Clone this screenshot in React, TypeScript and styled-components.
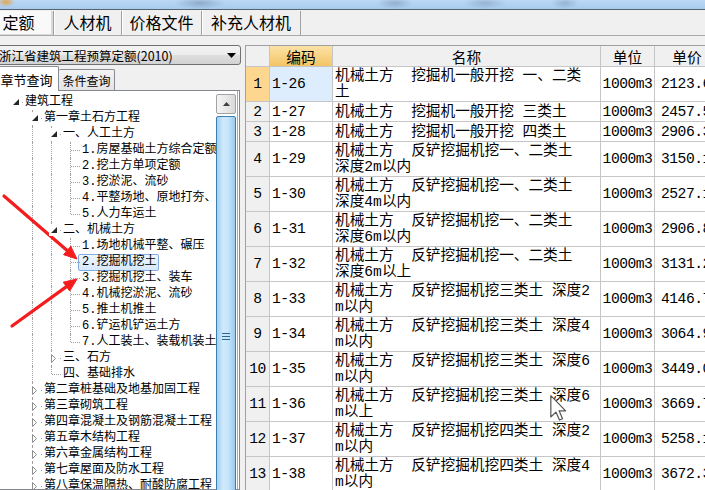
import React from 'react';
import styled, { createGlobalStyle, css } from 'styled-components';

const UI_FONT = `"Noto Sans CJK SC", "Noto Sans", sans-serif`;
const GRID_FONT = `"Liberation Mono", "Noto Sans CJK SC", monospace`;

const GlobalStyle = createGlobalStyle`
  * { box-sizing: border-box; }
  html, body {
    margin: 0;
    padding: 0;
    width: 705px;
    height: 490px;
    overflow: hidden;
    background: #f0f0f0;
  }
  #root { width: 705px; height: 490px; overflow: hidden; }
`;

const Window = styled.div`
  position: relative;
  width: 705px;
  height: 490px;
  overflow: hidden;
  display: flex;
  flex-direction: column;
  font-family: ${UI_FONT};
  color: #000;
  background: #f0f0f0;
`;

const TitleStrip = styled.div`
  flex: none;
  height: 10px;
  border-bottom: 1px solid #56626e;
  background:
    radial-gradient(ellipse 9px 5px at 6px 2px, rgba(230, 160, 60, 0.9), transparent),
    radial-gradient(ellipse 26px 6px at 200px 3px, rgba(95, 120, 150, 0.45), transparent),
    radial-gradient(ellipse 18px 6px at 395px 3px, rgba(95, 120, 150, 0.4), transparent),
    radial-gradient(ellipse 22px 6px at 485px 3px, rgba(95, 120, 150, 0.35), transparent),
    radial-gradient(ellipse 14px 6px at 565px 3px, rgba(95, 120, 150, 0.35), transparent),
    linear-gradient(#bcd9f5, #a7cbee);
`;

const TabBar = styled.div`
  flex: none;
  height: 26px;
  display: flex;
  padding-top: 1px;
  border-bottom: 1px solid #a9a9a9;
`;

const Tab = styled.div<{ $width: number; $active?: boolean }>`
  flex: none;
  width: ${(p) => p.$width}px;
  display: flex;
  align-items: center;
  justify-content: center;
  padding-bottom: 3px;
  font-size: 16px;
  border-right: 1px solid #a0a0a0;
  box-shadow: inset 1px 0 0 #ffffff;
  ${(p) =>
    p.$active &&
    css`
      background: #f9f9f9;
      box-shadow: inset -2px -1px 0 #dadada;
    `}
  &:first-child { margin-left: -16px; }
`;

const Main = styled.div`
  flex: 1;
  min-height: 0;
  display: flex;
`;

const LeftPanel = styled.div`
  flex: none;
  width: 247px;
  margin-left: -6px;
  padding-top: 9px;
  display: flex;
  flex-direction: column;
`;

const Dropdown = styled.div`
  flex: none;
  height: 20px;
  display: flex;
  align-items: center;
  justify-content: space-between;
  padding: 0 4px 0 4px;
  border: 1px solid #707070;
  border-radius: 3px;
  background: linear-gradient(#f4f4f4, #ececec 48%, #dedede 52%, #d2d2d2);
  font-size: 12.5px;
  white-space: nowrap;
`;

const SubTabs = styled.div`
  flex: none;
  height: 24px;
  margin-top: 1px;
  display: flex;
  align-items: flex-start;
`;

const SubTab = styled.div<{ $width: number; $active?: boolean }>`
  position: relative;
  z-index: 1;
  flex: none;
  width: ${(p) => p.$width}px;
  display: flex;
  align-items: center;
  justify-content: center;
  border: 1px solid #898c95;
  border-bottom: none;
  border-radius: 2px 2px 0 0;
  white-space: nowrap;
  ${(p) =>
    p.$active
      ? css`
          height: 25px;
          font-size: 13px;
          background: #ffffff;
        `
      : css`
          height: 21px;
          margin-top: 3px;
          font-size: 12px;
          border-left: none;
          background: linear-gradient(#f3f3f3, #e4e4e4);
        `}
`;

const TreeBox = styled.div`
  flex: 1;
  min-height: 0;
  margin-right: 1px;
  display: flex;
  padding-right: 3px;
  border: 1px solid #828790;
  background: #ffffff;
  box-shadow: inset -1px 0 0 #ffffff, inset -2px 0 0 #a9a9a9;
`;

const TreeList = styled.div`
  flex: 1;
  min-width: 0;
  overflow: hidden;
  padding: 3px 0 0 9px;
  font-family: ${GRID_FONT};
  font-size: 12px;
`;

const TreeRow = styled.div`
  height: 16px;
  display: flex;
  align-items: center;
  white-space: nowrap;
`;

type VLine = 'none' | 'full' | 'upper' | 'lower';

const vRange: Record<VLine, string> = {
  none: 'display: none;',
  full: 'top: 0; bottom: 0;',
  upper: 'top: 0; height: 8px;',
  lower: 'top: 8px; bottom: 0;',
};

const Guide = styled.span<{ $v: VLine; $h?: boolean }>`
  position: relative;
  flex: none;
  width: 19px;
  height: 16px;
  &::before {
    content: '';
    position: absolute;
    left: 9px;
    border-left: 1px dotted #a0a0a0;
    ${(p) => vRange[p.$v]}
  }
  ${(p) =>
    p.$h &&
    css`
      &::after {
        content: '';
        position: absolute;
        left: 10px;
        top: 8px;
        width: 9px;
        border-top: 1px dotted #a0a0a0;
      }
    `}
`;

const Expander = styled.span`
  position: absolute;
  z-index: 1;
  left: 7px;
  top: 2px;
  width: 10px;
  height: 12px;
  display: flex;
  align-items: center;
  padding-left: 2px;
  background: #ffffff;
`;

const TreeLabel = styled.span<{ $selected?: boolean }>`
  height: 16px;
  line-height: 14px;
  padding: 0 2px 0 1px;
  border: 1px solid transparent;
  ${(p) =>
    p.$selected &&
    css`
      height: 17px;
      line-height: 15px;
      margin-left: -2px;
      padding-left: 3px;
      border-color: #84acdd;
      border-radius: 2px;
      background: linear-gradient(#eff6fe, #d6e8fc);
    `}
`;

const ScrollBar = styled.div`
  flex: none;
  width: 20px;
  display: flex;
  flex-direction: column;
  gap: 2px;
  padding-top: 3px;
`;

const ScrollButton = styled.div`
  flex: none;
  height: 20px;
  display: flex;
  align-items: center;
  justify-content: center;
  border: 1px solid #a3a3a3;
  border-radius: 2px;
  background: linear-gradient(to right, #f4f4f4, #e9e9e9 50%, #d9d9d9);
`;

const ScrollThumb = styled.div`
  flex: none;
  height: 440px;
  display: flex;
  align-items: center;
  justify-content: center;
  border: 1px solid #3c7fb1;
  border-radius: 2px;
  background: linear-gradient(to right, #a3d0f0, #cfeafc 35%, #c3e4fa 65%, #98c9ec);
`;

const Splitter = styled.div`
  flex: none;
  width: 4px;
`;

const GridFrame = styled.div`
  flex: none;
  align-self: flex-start;
  width: 480px;
  margin-top: 9px;
  border-top: 1px solid #a0a0a0;
  border-left: 1px solid #a0a0a0;
  background: #ffffff;
  font-family: ${GRID_FONT};
  font-size: 14.67px;
`;

const GridRow = styled.div<{ $height: number }>`
  display: flex;
  height: ${(p) => p.$height}px;
`;

type Align = 'left' | 'center';

const Cell = styled.div<{ $width: number; $align?: Align; $bg?: string; $tight?: boolean; $pad?: number }>`
  flex: none;
  width: ${(p) => p.$width}px;
  display: flex;
  flex-direction: column;
  justify-content: center;
  align-items: ${(p) => (p.$align === 'center' ? 'center' : 'flex-start')};
  padding-left: ${(p) => p.$pad ?? 0}px;
  border-right: 1px solid #c6c6c6;
  border-bottom: 1px solid #c6c6c6;
  background: ${(p) => p.$bg ?? '#ffffff'};
  line-height: 16px;
  white-space: pre;
  overflow: hidden;
  letter-spacing: ${(p) => (p.$tight ? '-0.5px' : '0')};
`;

const HeadCell = styled.div<{ $width: number; $active?: boolean }>`
  flex: none;
  width: ${(p) => p.$width}px;
  display: flex;
  align-items: center;
  justify-content: center;
  font-family: ${UI_FONT};
  font-size: 14.67px;
  border-right: 1px solid #c6c6c6;
  border-bottom: 1px solid #c6c6c6;
  background: ${(p) => (p.$active ? 'linear-gradient(#fbe2a6, #f4c466)' : '#f0f0f0')};
`;

const Overlay = styled.svg`
  position: absolute;
  left: 0;
  top: 0;
  pointer-events: none;
`;

const Cursor = styled.svg`
  position: absolute;
  left: 550px;
  top: 395px;
  pointer-events: none;
`;

type Node = { label: string; open?: boolean; collapsed?: boolean; selected?: boolean; children?: Node[] };

const leaf = (label: string): Node => ({ label });

const tree: Node[] = [
  {
    label: '建筑工程',
    open: true,
    children: [
      {
        label: '第一章土石方工程',
        open: true,
        children: [
          {
            label: '一、人工土方',
            open: true,
            children: ['1.房屋基础土方综合定额', '2.挖土方单项定额', '3.挖淤泥、流砂', '4.平整场地、原地打夯、', '5.人力车运土'].map(leaf),
          },
          {
            label: '二、机械土方',
            open: true,
            children: [
              leaf('1.场地机械平整、碾压'),
              { label: '2.挖掘机挖土', selected: true },
              leaf('3.挖掘机挖土、装车'),
              leaf('4.机械挖淤泥、流砂'),
              leaf('5.推土机推土'),
              leaf('6.铲运机铲运土方'),
              leaf('7.人工装土、装载机装土'),
            ],
          },
          { label: '三、石方', collapsed: true },
          leaf('四、基础排水'),
        ],
      },
      { label: '第二章桩基础及地基加固工程', collapsed: true },
      { label: '第三章砌筑工程', collapsed: true },
      { label: '第四章混凝土及钢筋混凝土工程', collapsed: true },
      { label: '第五章木结构工程', collapsed: true },
      { label: '第六章金属结构工程', collapsed: true },
      { label: '第七章屋面及防水工程', collapsed: true },
      { label: '第八章保温隔热、耐酸防腐工程', collapsed: true },
    ],
  },
];

type FlatRow = { label: string; guides: VLine[]; glyph?: 'open' | 'closed'; selected?: boolean };

const flatten = (nodes: Node[], depth: number, trail: boolean[], out: FlatRow[]) => {
  nodes.forEach((n, i) => {
    const hasNext = i < nodes.length - 1;
    const own: VLine = depth === 0 && i === 0 ? (hasNext ? 'lower' : 'none') : hasNext ? 'full' : 'upper';
    out.push({
      label: n.label,
      guides: [...trail.map((t): VLine => (t ? 'full' : 'none')), own],
      glyph: n.open ? 'open' : n.collapsed ? 'closed' : undefined,
      selected: n.selected,
    });
    if (n.open && n.children) flatten(n.children, depth + 1, [...trail, hasNext], out);
  });
  return out;
};

const treeRows = flatten(tree, 0, [], []);

type Quota = { code: string; name: string[]; price: string };

const quotas: Quota[] = [
  { code: '1-26', name: ['机械土方  挖掘机一般开挖 一、二类', '土'], price: '2123.66' },
  { code: '1-27', name: ['机械土方  挖掘机一般开挖 三类土'], price: '2457.58' },
  { code: '1-28', name: ['机械土方  挖掘机一般开挖 四类土'], price: '2906.35' },
  { code: '1-29', name: ['机械土方  反铲挖掘机挖一、二类土', '深度2m以内'], price: '3150.19' },
  { code: '1-30', name: ['机械土方  反铲挖掘机挖一、二类土', '深度4m以内'], price: '2527.16' },
  { code: '1-31', name: ['机械土方  反铲挖掘机挖一、二类土', '深度6m以内'], price: '2906.87' },
  { code: '1-32', name: ['机械土方  反铲挖掘机挖一、二类土', '深度6m以上'], price: '3131.28' },
  { code: '1-33', name: ['机械土方  反铲挖掘机挖三类土 深度2', 'm以内'], price: '4146.78' },
  { code: '1-34', name: ['机械土方  反铲挖掘机挖三类土 深度4', 'm以内'], price: '3064.92' },
  { code: '1-35', name: ['机械土方  反铲挖掘机挖三类土 深度6', 'm以内'], price: '3449.08' },
  { code: '1-36', name: ['机械土方  反铲挖掘机挖三类土 深度6', 'm以上'], price: '3669.79' },
  { code: '1-37', name: ['机械土方  反铲挖掘机挖四类土 深度2', 'm以内'], price: '5258.17' },
  { code: '1-38', name: ['机械土方  反铲挖掘机挖四类土 深度4', 'm以内'], price: '3672.38' },
];

const COLS = { no: 24, code: 63, name: 268, unit: 54, price: 65 };

const Arrow: React.FC<{ x1: number; y1: number; x2: number; y2: number }> = ({ x1, y1, x2, y2 }) => {
  const len = Math.hypot(x2 - x1, y2 - y1);
  const ux = (x2 - x1) / len;
  const uy = (y2 - y1) / len;
  const bx = x2 - ux * 13;
  const by = y2 - uy * 13;
  const px = -uy * 5.5;
  const py = ux * 5.5;
  return (
    <g fill="#f41c1c" stroke="#f41c1c">
      <line x1={x1} y1={y1} x2={bx} y2={by} strokeWidth={3.2} strokeLinecap="round" />
      <polygon points={`${x2},${y2} ${bx + px},${by + py} ${bx - px},${by - py}`} strokeWidth={1} strokeLinejoin="round" />
    </g>
  );
};

export default function App() {
  return (
    <>
      <GlobalStyle />
      <Window>
        <TitleStrip />
        <TabBar>
          <Tab $width={70} $active>定额</Tab>
          <Tab $width={68}>人材机</Tab>
          <Tab $width={80}>价格文件</Tab>
          <Tab $width={99}>补充人材机</Tab>
        </TabBar>
        <Main>
          <LeftPanel>
            <Dropdown>
              <span>浙江省建筑工程预算定额(2010)</span>
              <svg width="9" height="5" viewBox="0 0 9 5">
                <polygon points="0,0 9,0 4.5,5" fill="#000" />
              </svg>
            </Dropdown>
            <SubTabs>
              <SubTab $width={65} $active>章节查询</SubTab>
              <SubTab $width={56}>条件查询</SubTab>
            </SubTabs>
            <TreeBox>
              <TreeList>
                {treeRows.map((r, i) => (
                  <TreeRow key={i}>
                    {r.guides.map((g, k) => {
                      const own = k === r.guides.length - 1;
                      return (
                        <Guide key={k} $v={g} $h={own}>
                          {own && r.glyph === 'open' && (
                            <Expander>
                              <svg width="6" height="6" viewBox="0 0 6 6">
                                <polygon points="6,0 6,6 0,6" fill="#262626" />
                              </svg>
                            </Expander>
                          )}
                          {own && r.glyph === 'closed' && (
                            <Expander>
                              <svg width="5" height="9" viewBox="0 0 5 9">
                                <polygon points="0.5,0.5 0.5,8.5 4.5,4.5" fill="#fff" stroke="#8c8c8c" />
                              </svg>
                            </Expander>
                          )}
                        </Guide>
                      );
                    })}
                    <TreeLabel $selected={r.selected}>{r.label}</TreeLabel>
                  </TreeRow>
                ))}
              </TreeList>
              <ScrollBar>
                <ScrollButton>
                  <svg width="7" height="4" viewBox="0 0 7 4">
                    <polygon points="0,4 3.5,0 7,4" fill="#404040" />
                  </svg>
                </ScrollButton>
                <ScrollThumb>
                  <svg width="8" height="9" viewBox="0 0 8 9">
                    <g stroke="#2f6690" strokeWidth="1">
                      <line x1="0" y1="1.5" x2="8" y2="1.5" />
                      <line x1="0" y1="4.5" x2="8" y2="4.5" />
                      <line x1="0" y1="7.5" x2="8" y2="7.5" />
                    </g>
                  </svg>
                </ScrollThumb>
              </ScrollBar>
            </TreeBox>
          </LeftPanel>
          <Splitter />
          <GridFrame>
            <GridRow $height={21}>
              <HeadCell $width={COLS.no} />
              <HeadCell $width={COLS.code} $active>编码</HeadCell>
              <HeadCell $width={COLS.name}>名称</HeadCell>
              <HeadCell $width={COLS.unit}>单位</HeadCell>
              <HeadCell $width={COLS.price}>单价</HeadCell>
            </GridRow>
            {quotas.map((q, i) => {
              const first = i === 0;
              return (
                <GridRow key={q.code} $height={q.name.length > 1 ? 35 : 20}>
                  <Cell $width={COLS.no} $align="center" $tight $bg={first ? '#fdd78f' : '#f0f0f0'}>
                    {i + 1}
                  </Cell>
                  <Cell $width={COLS.code} $pad={2} $tight $bg={first ? '#ddedfd' : undefined}>
                    {q.code}
                  </Cell>
                  <Cell $width={COLS.name} $pad={2}>
                    {q.name.map((line, k) => (
                      <span key={k}>{line}</span>
                    ))}
                  </Cell>
                  <Cell $width={COLS.unit} $align="center" $tight>
                    1000m3
                  </Cell>
                  <Cell $width={COLS.price} $pad={6} $tight>
                    {q.price}
                  </Cell>
                </GridRow>
              );
            })}
          </GridFrame>
        </Main>
        <Overlay width="705" height="490" viewBox="0 0 705 490">
          <Arrow x1={4} y1={196} x2={77} y2={259} />
          <Arrow x1={12} y1={326} x2={77} y2={279} />
        </Overlay>
        <Cursor width="17" height="26" viewBox="0 0 12.5 19.5">
          <path
            d="M0.5,0.5 L0.5,16.5 L4.3,12.8 L7,18.8 L9.3,17.8 L6.7,11.9 L11.6,11.9 Z"
            fill="#ffffff"
            stroke="#555"
            strokeWidth="0.9"
            strokeLinejoin="round"
          />
        </Cursor>
      </Window>
    </>
  );
}
